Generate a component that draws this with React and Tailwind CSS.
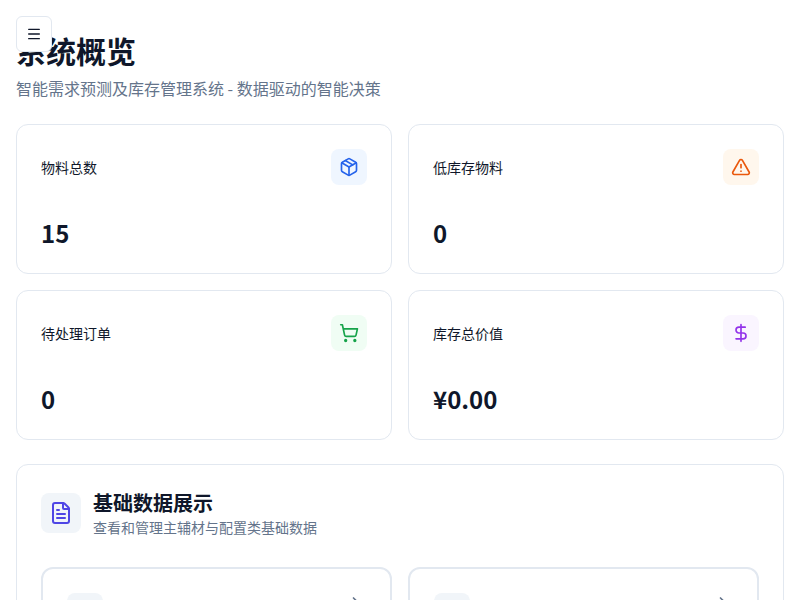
import React from "react";
import {
  Menu,
  Package,
  TriangleAlert,
  ShoppingCart,
  DollarSign,
  FileText,
  ChevronRight,
} from "lucide-react";

const stats = [
  { label: "物料总数", value: "15", Icon: Package, tone: "bg-[#eff6ff] text-[#2563eb]" },
  { label: "低库存物料", value: "0", Icon: TriangleAlert, tone: "bg-[#fff7ed] text-[#ea580c]" },
  { label: "待处理订单", value: "0", Icon: ShoppingCart, tone: "bg-[#f0fdf4] text-[#16a34a]" },
  { label: "库存总价值", value: "¥0.00", Icon: DollarSign, tone: "bg-[#faf5ff] text-[#9333ea]" },
];

function StatCard({ label, value, Icon, tone }) {
  return (
    <div className="rounded-xl border border-[#e2e8f0] bg-white p-6">
      <div className="flex items-center justify-between">
        <h3 className="text-sm font-normal">{label}</h3>
        <div className={`rounded-lg p-2 ${tone}`}>
          <Icon size={20} />
        </div>
      </div>
      <div className="mt-8 text-2xl font-bold">{value}</div>
    </div>
  );
}

function DataCard() {
  return (
    <div className="flex h-44 items-start justify-between rounded-xl border-2 border-[#e2e8f0] bg-white p-6">
      <div className="size-9 rounded-lg bg-[#f1f5f9]" />
      <ChevronRight size={20} className="text-[#64748b]" />
    </div>
  );
}

export default function App() {
  return (
    <div className="relative h-screen overflow-hidden bg-white font-['Noto_Sans_CJK_SC',sans-serif] text-[#0f172a]">
      <button
        aria-label="菜单"
        className="absolute top-4 left-4 z-10 flex size-9 items-center justify-center rounded-md border border-[#e2e8f0] bg-white"
      >
        <Menu size={16} />
      </button>
      <main className="px-4 pt-8">
        <header>
          <h1 className="text-3xl font-bold">系统概览</h1>
          <p className="mt-2 text-base text-[#64748b]">
            智能需求预测及库存管理系统 - 数据驱动的智能决策
          </p>
        </header>
        <section className="mt-6 grid grid-cols-2 gap-4">
          {stats.map((s) => (
            <StatCard key={s.label} {...s} />
          ))}
        </section>
        <section className="mt-6 rounded-xl border border-[#e2e8f0] bg-white p-6">
          <div className="flex items-center gap-3">
            <div className="rounded-lg bg-[#f1f5f9] p-2 text-[#4f46e5]">
              <FileText size={24} />
            </div>
            <div>
              <h2 className="text-xl font-bold">基础数据展示</h2>
              <p className="text-sm text-[#64748b]">查看和管理主辅材与配置类基础数据</p>
            </div>
          </div>
          <div className="mt-[30px] grid grid-cols-2 gap-4">
            <DataCard />
            <DataCard />
          </div>
        </section>
      </main>
    </div>
  );
}
